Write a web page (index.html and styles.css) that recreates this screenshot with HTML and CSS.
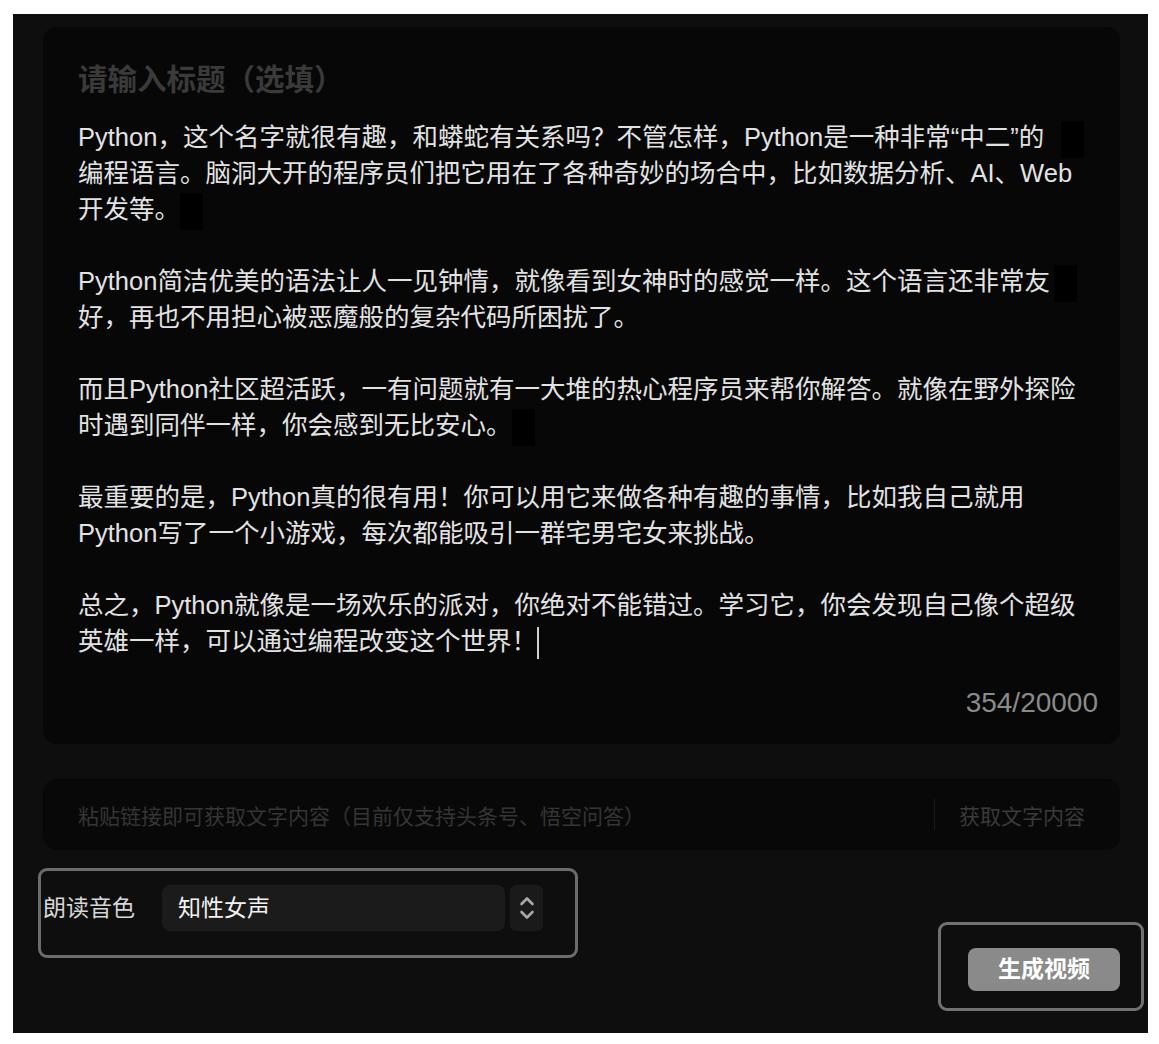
FILE: index.html
```html
<!DOCTYPE html>
<html lang="zh-CN">
<head>
<meta charset="utf-8">
<title>生成视频</title>
<link rel="stylesheet" href="styles.css">
</head>
<body>
<div class="panel">
  <div class="card">
    <div class="title">请输入标题（选填）</div>
    <div class="body">
      <div class="line">Python，这个名字就很有趣，和蟒蛇有关系吗？不管怎样，Python是一种非常“中二”的<span class="blk blk-far"></span></div>
      <div class="line">编程语言。脑洞大开的程序员们把它用在了各种奇妙的场合中，比如数据分析、AI、Web</div>
      <div class="line">开发等。<span class="blk"></span></div>
      <div class="line"></div>
      <div class="line">Python简洁优美的语法让人一见钟情，就像看到女神时的感觉一样。这个语言还非常友<span class="blk blk-near"></span></div>
      <div class="line">好，再也不用担心被恶魔般的复杂代码所困扰了。</div>
      <div class="line"></div>
      <div class="line">而且Python社区超活跃，一有问题就有一大堆的热心程序员来帮你解答。就像在野外探险</div>
      <div class="line">时遇到同伴一样，你会感到无比安心。<span class="blk"></span></div>
      <div class="line"></div>
      <div class="line">最重要的是，Python真的很有用！你可以用它来做各种有趣的事情，比如我自己就用</div>
      <div class="line">Python写了一个小游戏，每次都能吸引一群宅男宅女来挑战。</div>
      <div class="line"></div>
      <div class="line">总之，Python就像是一场欢乐的派对，你绝对不能错过。学习它，你会发现自己像个超级</div>
      <div class="line">英雄一样，可以通过编程改变这个世界！<span class="caret"></span></div>
    </div>
    <div class="count">354/20000</div>
  </div>

  <div class="linkbar">
    <div class="link-ph">粘贴链接即可获取文字内容（目前仅支持头条号、悟空问答）</div>
    <div class="sep"></div>
    <div class="fetch">获取文字内容</div>
  </div>

  <div class="bottom">
    <div class="voice">
      <div class="voice-label">朗读音色</div>
      <div class="select">知性女声</div>
      <div class="stepper">
        <svg width="16" height="34" viewBox="0 0 16 34">
          <path d="M2.5 13 L8 7.5 L13.5 13" fill="none" stroke="#a8a8a8" stroke-width="2.6" stroke-linecap="round" stroke-linejoin="round"/>
          <path d="M2.5 21 L8 26.5 L13.5 21" fill="none" stroke="#a8a8a8" stroke-width="2.6" stroke-linecap="round" stroke-linejoin="round"/>
        </svg>
      </div>
    </div>
    <div class="btnbox">
      <div class="btn">生成视频</div>
    </div>
  </div>
</div>
</body>
</html>
```

FILE: styles.css
```css
html, body {
  margin: 0;
  padding: 0;
  background: #ffffff;
}
body {
  font-family: "Liberation Sans", "Noto Sans CJK SC", sans-serif;
  text-spacing-trim: space-all;
}
.panel {
  margin: 14px 0 0 13px;
  width: 1135px;
  height: 1019px;
  box-sizing: border-box;
  padding: 13px 28px 0 30px;
  background: #0e0e0e;
  display: flex;
  flex-direction: column;
}
.card {
  background: #070707;
  border-radius: 14px;
  height: 717px;
  box-sizing: border-box;
  padding: 35px 22px 0 35px;
  display: flex;
  flex-direction: column;
}
.title {
  font-size: 29.5px;
  line-height: 36px;
  font-weight: bold;
  color: #3a3a3a;
  white-space: nowrap;
}
.body {
  margin-top: 21px;
  font-size: 25.5px;
  line-height: 36px;
  color: #e2e2e2;
}
.line {
  height: 36px;
  white-space: nowrap;
}
.blk {
  display: inline-block;
  width: 23px;
  height: 37px;
  background: #000;
  vertical-align: middle;
  margin-left: 0;
}
.blk-far {
  margin-left: 17px;
}
.blk-near {
  margin-left: 4px;
}
.caret {
  display: inline-block;
  width: 2px;
  height: 32px;
  background: #d0d0d0;
  vertical-align: middle;
  margin-left: 0;
}
.count {
  margin-top: 26px;
  align-self: flex-end;
  font-size: 28px;
  line-height: 36px;
  color: #8a8a8a;
}
.linkbar {
  margin-top: 35px;
  height: 71px;
  background: #080808;
  border-radius: 14px;
  display: flex;
  align-items: center;
  padding: 0 35px;
  font-size: 21px;
}
.link-ph {
  flex: 1;
  color: #353535;
  white-space: nowrap;
}
.sep {
  width: 1px;
  height: 31px;
  background: #1c1c1c;
  margin-right: 24px;
}
.fetch {
  color: #3a3a3a;
  white-space: nowrap;
}
.bottom {
  margin-top: 18px;
  display: flex;
  justify-content: space-between;
  align-items: flex-start;
}
.voice {
  margin-left: -5px;
  width: 540px;
  height: 90px;
  box-sizing: border-box;
  border: 3px solid #6c6c6c;
  border-radius: 9px;
  padding: 14px 0 0 2px;
  display: flex;
  align-items: flex-start;
}
.voice-label {
  font-size: 23px;
  line-height: 46px;
  color: #d6d6d6;
  margin-right: 27px;
}
.select {
  width: 343px;
  height: 46px;
  box-sizing: border-box;
  background: #1b1b1b;
  border-radius: 8px;
  padding-left: 16px;
  font-size: 23px;
  line-height: 46px;
  color: #f2f2f2;
}
.stepper {
  margin-left: 5px;
  width: 33px;
  height: 46px;
  background: #1a1a1a;
  border-radius: 6px;
  display: flex;
  align-items: center;
  justify-content: center;
}
.btnbox {
  margin-top: 54px;
  margin-right: -24px;
  width: 206px;
  height: 89px;
  box-sizing: border-box;
  border: 3px solid #717171;
  border-radius: 9px;
  padding: 23px 21px 0 27px;
}
.btn {
  height: 43px;
  background: #8a8a8a;
  border-radius: 8px;
  color: #ffffff;
  font-size: 23px;
  font-weight: bold;
  line-height: 43px;
  text-align: center;
}
```
